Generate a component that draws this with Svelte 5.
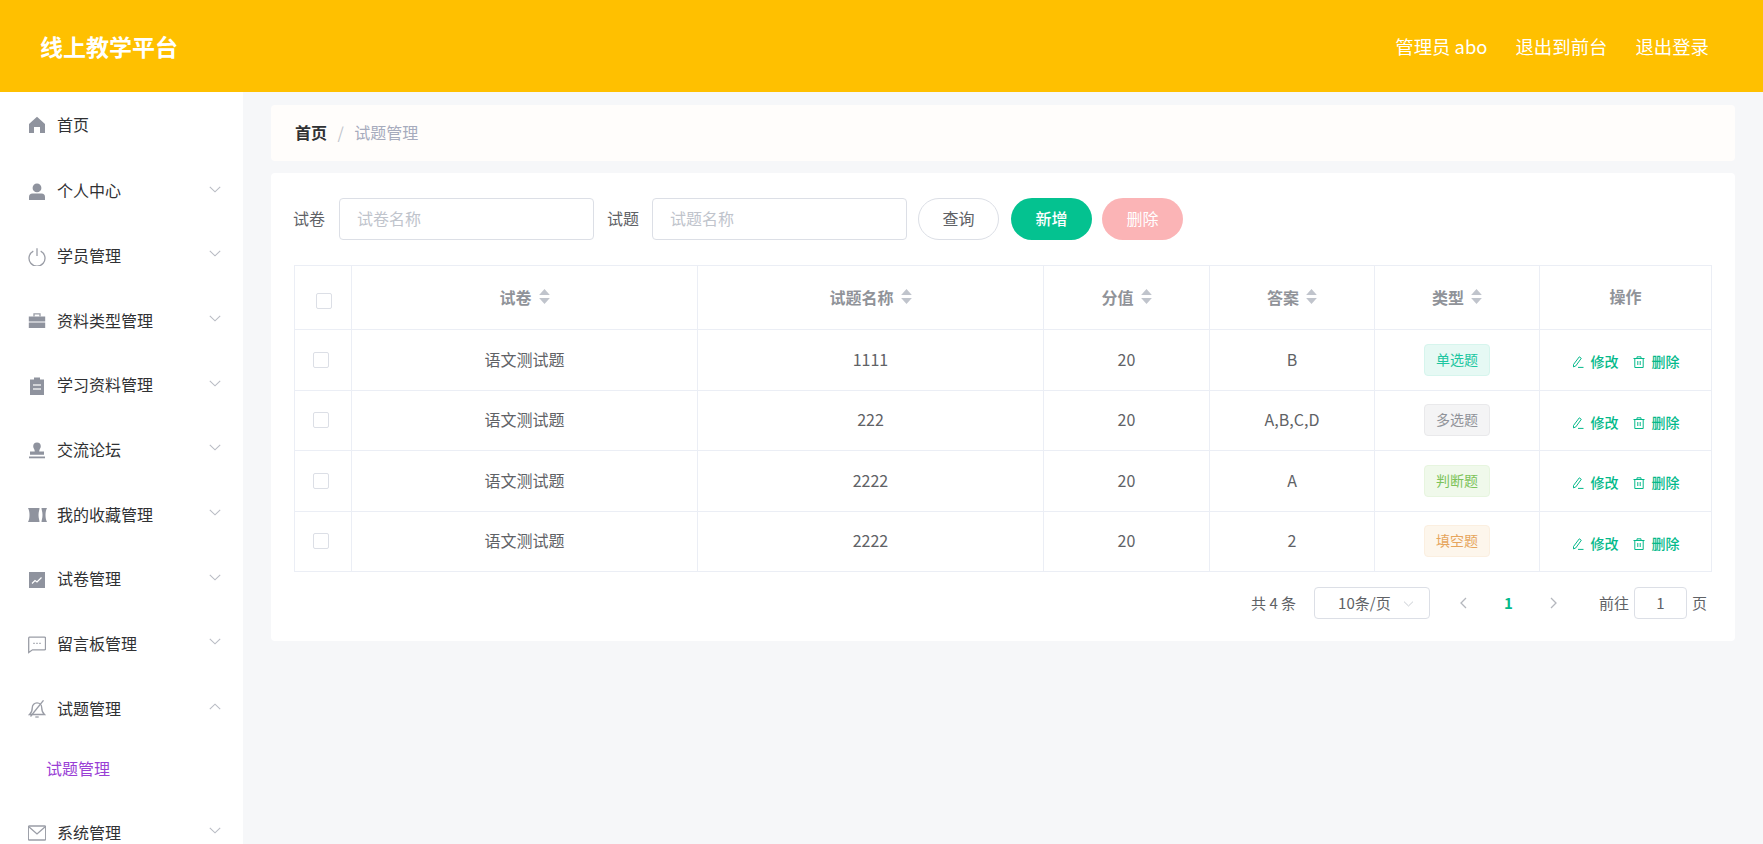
<script>
  const icons = {
    home: { f: ['M9 .8 17 8v9h-5v-6H6v6H1V8Z'] },
    user: { f: ['M9 .5a4.400 4.400 0 1 1 0 8.800 4.400 4.400 0 0 1 0-8.800Z', 'M1 14a3.500 3.500 0 0 1 3.500-3.500h9A3.500 3.500 0 0 1 17 14v3H1Z'] },
    power: { s: ['M5.300 3.100a8 8 0 1 0 7.400 0', 'M9 .3V8'] },
    brief: { f: ['M.8 4.500h16.400v5H.8Z', 'M.8 10.500h16.400V16H.8Z'], s: ['M6 4.500V1.800h6v2.700'] },
    clip: { f: ['M6 .5h6v2h4v15.500H2V2.500h4Z'], w: ['M5 8h8', 'M5 12h8'] },
    stamp: { f: ['M9 .5A3.800 3.800 0 0 1 12.800 4.300c0 2-1.600 3.200-1.600 5.200H16v3.200H2V9.500h4.800c0-2-1.600-3.200-1.600-5.200A3.800 3.800 0 0 1 9 .5Z', 'M1 14.500h16v1.800H1Z'] },
    ticket: { f: ['M0 2h11.500c0 2-1 3.500-1 7s1 5 1 7H0c1-2 1.500-4 1.500-7S1 4 0 2Z', 'M13.500 2H19c-1 2-1.500 4-1.500 7s.5 5 1.500 7h-5.500c0-2 1-3.500 1-7s-1-5-1-7Z'] },
    chart: { f: ['M1 1h16v16H1Z'], w: ['M4 12.500 7 9.500l2 1.500 4.500-4.500'] },
    chat: { s: ['M1.500 1.200h15a1 1 0 0 1 1 1v10.600a1 1 0 0 1-1 1H4.500l-3.800 2.700V2.200a1 1 0 0 1 .8-1Z'], d: ['M5.300 7.300h1.400', 'M8.300 7.300h1.400', 'M11.300 7.300h1.400'] },
    bell: { s: ['M1.500 14.500c1.800-1.500 2.800-3.500 2.800-7a4.700 4.700 0 0 1 9.400 0c0 3.500 1 5.500 2.800 7Z', 'M7.300 17h3.400', 'M2.500 16.500 15.500.3'] },
    mail: { s: ['M1.300 2h15.400a1 1 0 0 1 1 1v12a1 1 0 0 1-1 1H1.300a1 1 0 0 1-1-1V3a1 1 0 0 1 1-1Z', 'M.8 2.800 9 10l8.200-7.200'] }
  };

  const menu = [
    { label: '首页', icon: 'home', first: true },
    { label: '个人中心', icon: 'user', arrow: 'down' },
    { label: '学员管理', icon: 'power', arrow: 'down' },
    { label: '资料类型管理', icon: 'brief', arrow: 'down' },
    { label: '学习资料管理', icon: 'clip', arrow: 'down' },
    { label: '交流论坛', icon: 'stamp', arrow: 'down' },
    { label: '我的收藏管理', icon: 'ticket', arrow: 'down', wide: true },
    { label: '试卷管理', icon: 'chart', arrow: 'down' },
    { label: '留言板管理', icon: 'chat', arrow: 'down' },
    { label: '试题管理', icon: 'bell', arrow: 'up', sub: '试题管理' },
    { label: '系统管理', icon: 'mail', arrow: 'down' }
  ];

  const columns = [
    { label: '试卷', w: 346 },
    { label: '试题名称', w: 346 },
    { label: '分值', w: 166 },
    { label: '答案', w: 165 },
    { label: '类型', w: 165 }
  ];

  const rows = [
    { paper: '语文测试题', name: '1111', score: '20', answer: 'B', type: '单选题', tone: 'mint' },
    { paper: '语文测试题', name: '222', score: '20', answer: 'A,B,C,D', type: '多选题', tone: 'grey' },
    { paper: '语文测试题', name: '2222', score: '20', answer: 'A', type: '判断题', tone: 'lime' },
    { paper: '语文测试题', name: '2222', score: '20', answer: '2', type: '填空题', tone: 'amber' }
  ];
</script>

<div class="page">
  <header class="topbar">
    <div class="brand">线上教学平台</div>
    <nav class="top-links">
      <span>管理员 abo</span>
      <span>退出到前台</span>
      <span>退出登录</span>
    </nav>
  </header>

  <div class="body">
    <aside class="sidebar">
      {#each menu as item}
        <div class="menu-item" class:first={item.first}>
          <svg class="menu-icon" class:wide={item.wide} viewBox={item.wide ? '0 0 19 18' : '0 0 18 18'} aria-hidden="true">
            {#each icons[item.icon].f ?? [] as d}<path {d} class="i-fill" />{/each}
            {#each icons[item.icon].s ?? [] as d}<path {d} class="i-stroke" />{/each}
            {#each icons[item.icon].w ?? [] as d}<path {d} class="i-white" />{/each}
            {#each icons[item.icon].d ?? [] as d}<path {d} class="i-stroke" />{/each}
          </svg>
          <span class="menu-label">{item.label}</span>
          {#if item.arrow}
            <svg class="chevron" viewBox="0 0 12 7" aria-hidden="true">
              <path d={item.arrow === 'down' ? 'M.8.8 6 5.800 11.200.8' : 'M.8 6.200 6 1.200l5.200 5'} />
            </svg>
          {/if}
        </div>
        {#if item.sub}
          <div class="sub-item"><span>{item.sub}</span></div>
        {/if}
      {/each}
    </aside>

    <main class="content">
      <div class="breadcrumb">
        <strong>首页</strong>
        <span class="sep">/</span>
        <span class="crumb">试题管理</span>
      </div>

      <section class="card">
        <div class="filters">
          <span class="f-label">试卷</span>
          <div class="input"><span>试卷名称</span></div>
          <span class="f-label second">试题</span>
          <div class="input"><span>试题名称</span></div>
          <button class="btn plain"><span>查询</span></button>
          <button class="btn primary"><span>新增</span></button>
          <button class="btn danger"><span>删除</span></button>
        </div>

        <table>
          <thead>
            <tr>
              <th class="check head-check"><span class="box"></span></th>
              {#each columns as col}
                <th style="width:{col.w}px">
                  <span class="th-inner">
                    {col.label}
                    <svg class="sort" viewBox="0 0 10 14" aria-hidden="true">
                      <path d="M5 0 10 5.500H0Z" /><path d="M5 14 0 8.500h10Z" />
                    </svg>
                  </span>
                </th>
              {/each}
              <th>操作</th>
            </tr>
          </thead>
          <tbody>
            {#each rows as row}
              <tr>
                <td class="check"><span class="box"></span></td>
                <td>{row.paper}</td>
                <td>{row.name}</td>
                <td>{row.score}</td>
                <td>{row.answer}</td>
                <td class="tag-cell"><span class="tag {row.tone}">{row.type}</span></td>
                <td class="tag-cell">
                  <span class="actions">
                    <span class="act">
                      <svg viewBox="0 0 12 12" aria-hidden="true"><path d="M1.500 8.500 7.300.8l2 1.500-5.500 7.600-2.300 1ZM6 11.400h5.500" /></svg>
                      修改
                    </span>
                    <span class="act">
                      <svg viewBox="0 0 12 12" aria-hidden="true"><path d="M.5 2.500h11M4 2.500V.8h4v1.700M1.800 2.500v9h8.400v-9M4.800 5v4M7.200 5v4" /></svg>
                      删除
                    </span>
                  </span>
                </td>
              </tr>
            {/each}
          </tbody>
        </table>

        <div class="pager">
          <span>共 4 条</span>
          <div class="select">
            <span>10条/页</span>
            <svg viewBox="0 0 12 7" aria-hidden="true"><path d="M.8.8 6 5.800 11.200.8" /></svg>
          </div>
          <svg class="page-arrow prev" viewBox="0 0 7 12" aria-hidden="true"><path d="M6 1 1 6l5 5" /></svg>
          <span class="current">1</span>
          <svg class="page-arrow next" viewBox="0 0 7 12" aria-hidden="true"><path d="m1 1 5 5-5 5" /></svg>
          <span class="goto">前往</span>
          <div class="page-input">1</div>
          <span>页</span>
        </div>
      </section>
    </main>
  </div>
</div>

<style>
  :global(body) {
    margin: 0;
    background: #f6f7f9;
  }
  .page {
    height: 844px;
    overflow: hidden;
    display: flex;
    flex-direction: column;
    font-family: "Noto Sans CJK SC", "Noto Sans", sans-serif;
    color: #606266;
  }
  .topbar {
    height: 92px;
    flex: none;
    background: #ffc000;
    color: #fff;
    display: flex;
    align-items: center;
    justify-content: space-between;
    padding: 0 54px 0 40px;
  }
  .brand {
    font-size: 23px;
    font-weight: 700;
  }
  .top-links {
    display: flex;
    gap: 28px;
    font-size: 18.400px;
  }
  .body {
    flex: 1;
    display: flex;
    min-height: 0;
  }
  .sidebar {
    width: 243px;
    flex: none;
    background: #fff;
    overflow: hidden;
  }
  .menu-item {
    height: 64.700px;
    display: flex;
    align-items: center;
    padding-left: 28px;
    color: #303133;
    font-size: 16px;
    position: relative;
  }
  .menu-item.first {
    height: 66px;
    margin-bottom: 1.500px;
  }
  .menu-icon {
    width: 18px;
    height: 18px;
    margin-right: 11px;
    flex: none;
  }
  .menu-icon.wide {
    width: 19px;
    margin-right: 10px;
  }
  .menu-label {
    margin-top: -3px;
  }
  .i-fill {
    fill: #8f939e;
  }
  .i-stroke {
    fill: none;
    stroke: #9a9da6;
    stroke-width: 1.300;
  }
  .i-white {
    fill: none;
    stroke: #fff;
    stroke-width: 1.200;
  }
  .chevron {
    position: absolute;
    left: 209px;
    top: 26px;
    width: 12px;
    height: 7px;
    fill: none;
    stroke: #b9bcc4;
    stroke-width: 1.100;
  }
  .sub-item {
    height: 56px;
    margin-bottom: 3.500px;
    margin-top: -0.500px;
    display: flex;
    align-items: center;
    padding-left: 46px;
    font-size: 16px;
    color: #9a3fd5;
  }
  .sub-item span {
    margin-top: -3px;
  }
  .content {
    flex: 1;
    padding: 13px 28px 0 28px;
    min-width: 0;
  }
  .breadcrumb {
    height: 56px;
    background: #fffdfb;
    border-radius: 4px;
    display: flex;
    align-items: center;
    padding: 0 0 2px 24px;
    box-sizing: border-box;
    font-size: 16px;
  }
  .breadcrumb strong {
    color: #303133;
    font-weight: 700;
  }
  .sep {
    color: #c0c4cc;
    margin: 0 10.500px;
  }
  .crumb {
    color: #a6abbd;
  }
  .card {
    margin-top: 12px;
    height: 468px;
    box-sizing: border-box;
    background: #fff;
    border-radius: 4px;
    padding: 25px 23px 0 23px;
  }
  .filters {
    display: flex;
    align-items: center;
    height: 42px;
    font-size: 16px;
  }
  .f-label {
    width: 32px;
    margin-left: -1px;
    margin-right: 14px;
    white-space: nowrap;
    padding-bottom: 2px;
  }
  .f-label.second {
    margin-left: 13px;
    margin-right: 13px;
  }
  .input {
    width: 255px;
    height: 42px;
    box-sizing: border-box;
    border: 1px solid #dcdfe6;
    border-radius: 4px;
    display: flex;
    align-items: center;
    padding: 0 0 2px 17px;
    color: #c0c4cc;
  }
  .btn {
    width: 81px;
    height: 42px;
    border-radius: 21px;
    border: 1px solid transparent;
    font: inherit;
    padding: 0 0 2px;
    margin-left: 10px;
  }
  .btn.plain {
    background: #fff;
    border-color: #dcdfe6;
    color: #606266;
    margin-left: 11px;
  }
  .btn.primary {
    background: #04c290;
    color: #fff;
    font-weight: 500;
    margin-left: 12px;
  }
  .btn.danger {
    background: #fbb4b6;
    color: #fff;
  }
  table {
    width: 1418px;
    margin-top: 25px;
    border-collapse: collapse;
    table-layout: fixed;
    font-size: 16px;
  }
  th,
  td {
    box-sizing: border-box;
    border: 1px solid #ebeef5;
    padding: 0 0 2px;
    text-align: center;
  }
  th {
    height: 64px;
    color: #909399;
    font-weight: 700;
    padding-bottom: 4px;
  }
  td {
    height: 60.500px;
  }
  td.tag-cell {
    padding-bottom: 0;
  }
  .check {
    width: 57px;
    padding: 0;
  }
  .box {
    display: block;
    width: 16px;
    height: 16px;
    box-sizing: border-box;
    border: 1px solid #dcdfe6;
    border-radius: 2px;
    background: #fff;
    margin-left: 18px;
  }
  .head-check .box {
    margin-left: 21px;
    margin-top: 6px;
  }
  .th-inner {
    display: inline-flex;
    align-items: center;
    gap: 7px;
    vertical-align: middle;
  }
  .sort {
    width: 11px;
    height: 15px;
    fill: #c0c4cc;
  }
  .tag {
    display: inline-block;
    width: 66px;
    height: 32px;
    line-height: 28px;
    box-sizing: border-box;
    border: 1px solid;
    border-radius: 4px;
    font-size: 14px;
    vertical-align: middle;
  }
  .mint {
    background: #e6f9f4;
    border-color: #d6f5ed;
    color: #1cc6a0;
  }
  .grey {
    background: #f4f4f5;
    border-color: #e9e9eb;
    color: #909399;
  }
  .lime {
    background: #f0f9eb;
    border-color: #e7f5df;
    color: #7cc35a;
  }
  .amber {
    background: #fdf6ec;
    border-color: #fbefe0;
    color: #e6a55c;
  }
  .actions {
    display: inline-flex;
    gap: 14px;
    font-size: 14px;
    color: #04b98a;
    font-weight: 500;
    margin-top: -2px;
    vertical-align: middle;
  }
  .act {
    display: inline-flex;
    align-items: center;
    gap: 7px;
  }
  .act svg {
    width: 12px;
    height: 12px;
    margin-top: 2px;
    fill: none;
    stroke: #04b98a;
    stroke-width: 1;
  }
  .pager {
    display: flex;
    align-items: center;
    justify-content: flex-end;
    height: 32px;
    margin-top: 15px;
    padding-right: 5px;
    font-size: 15px;
  }
  .pager > span {
    margin-top: -2px;
  }
  .select {
    width: 116px;
    height: 32px;
    box-sizing: border-box;
    border: 1px solid #dcdfe6;
    border-radius: 4px;
    margin-left: 18px;
    padding: 0 0 2px 23px;
    display: flex;
    align-items: center;
    position: relative;
  }
  .select svg {
    position: absolute;
    right: 15px;
    top: 13px;
    width: 11px;
    height: 6px;
    fill: none;
    stroke: #c0c4cc;
  }
  .page-arrow {
    width: 7px;
    height: 12px;
    fill: none;
    stroke: #b4b7bd;
    stroke-width: 1.300;
  }
  .prev {
    margin-left: 29.500px;
  }
  .pager .current {
    margin-left: 37.500px;
    margin-right: 37.500px;
    color: #04b98a;
    font-weight: 700;
  }
  .pager .goto {
    margin-left: 41.500px;
  }
  .page-input {
    width: 53px;
    height: 32px;
    box-sizing: border-box;
    border: 1px solid #dcdfe6;
    border-radius: 4px;
    margin: 0 5px;
    padding-bottom: 2px;
    display: flex;
    align-items: center;
    justify-content: center;
  }
</style>
